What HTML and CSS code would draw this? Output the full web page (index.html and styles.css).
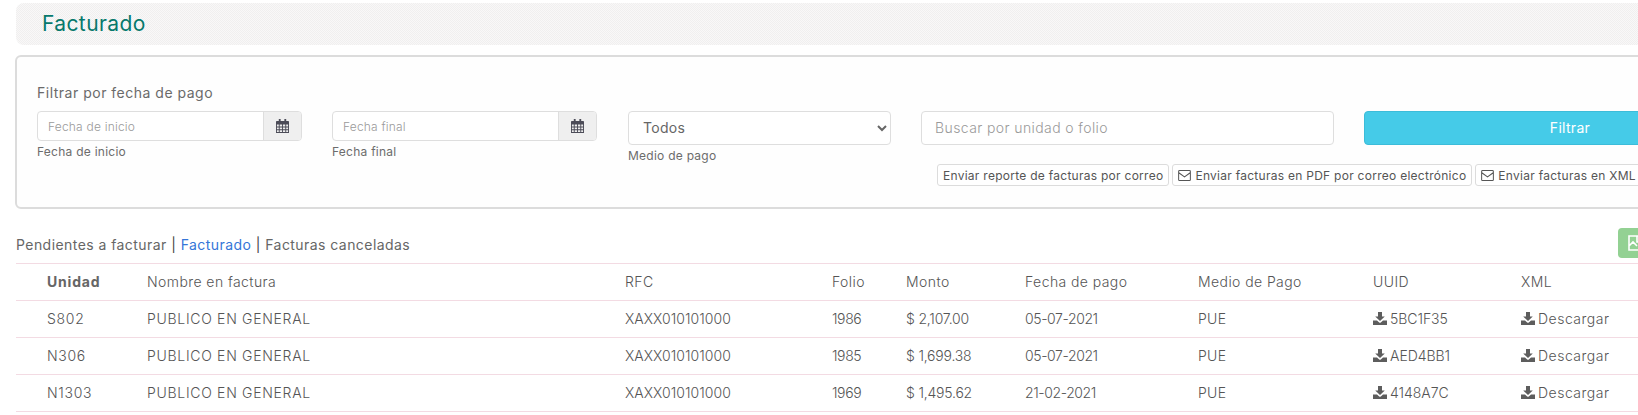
FILE: index.html
```html
<!DOCTYPE html>
<html lang="es">
<head>
<meta charset="utf-8">
<title>Facturado</title>
<link rel="stylesheet" href="styles.css">
</head>
<body>
<svg class="defs" width="0" height="0" aria-hidden="true">
  <symbol id="cal" viewBox="0 0 14 15">
    <path fill="currentColor" fill-rule="evenodd" d="M3 0h2v2h4V0h2v2h2.200c.4 0 .8.400.8.800V15H0V2.800C0 2.400.4 2 .8 2H3zM1 6v2h2V6zm3 0v2h2.500V6zm3.500 0v2H10V6zM11 6v2h2V6zM1 9v2h2V9zm3 0v2h2.500V9zm3.500 0v2H10V9zM11 9v2h2V9zM1 12v2h2v-2zm3 0v2h2.500v-2zm3.500 0v2H10v-2zM11 12v2h2v-2z"/>
  </symbol>
  <symbol id="env" viewBox="0 0 14 12">
    <path fill="none" stroke="currentColor" stroke-width="1.100" d="M1.500.6h11c.5 0 .9.400.9.900v9c0 .5-.4.900-.9.900h-11c-.5 0-.9-.4-.9-.9v-9c0-.5.400-.9.900-.900zM.8 3l6.200 4.600L13.200 3"/>
  </symbol>
  <symbol id="dl" viewBox="0 0 14 13">
    <path fill="currentColor" d="M5 0h4v4.500h2.800L7 9 2.200 4.500H5z"/>
    <path fill="currentColor" d="M0 8.500h4L6.200 10.500c.5.400 1.100.4 1.600 0L10 8.500h4V13H0z"/>
  </symbol>
</svg>

<main class="page">
  <header class="band"><h1 class="title">Facturado</h1></header>

  <section class="panel">
    <p class="panel-title">Filtrar por fecha de pago</p>
    <div class="filters">
      <div class="field date">
        <div class="date-group">
          <input class="date-input" type="text" placeholder="Fecha de inicio">
          <span class="addon"><svg class="cal"><use href="#cal"/></svg></span>
        </div>
        <span class="hint">Fecha de inicio</span>
      </div>
      <div class="field date date-last">
        <div class="date-group">
          <input class="date-input" type="text" placeholder="Fecha final">
          <span class="addon"><svg class="cal"><use href="#cal"/></svg></span>
        </div>
        <span class="hint">Fecha final</span>
      </div>
      <div class="field pay">
        <select class="select"><option>Todos</option></select>
        <span class="hint hint-low">Medio de pago</span>
      </div>
      <div class="field search">
        <input class="search-input" type="text" placeholder="Buscar por unidad o folio">
      </div>
      <button class="filter-btn" type="button">Filtrar</button>
    </div>
    <div class="mail-row">
      <button class="mail-btn" type="button">Enviar reporte de facturas por correo</button>
      <button class="mail-btn" type="button"><svg class="env"><use href="#env"/></svg>Enviar facturas en PDF por correo electrónico</button>
      <button class="mail-btn last" type="button"><svg class="env"><use href="#env"/></svg>Enviar facturas en XML</button>
    </div>
  </section>

  <div class="tabs-row">
    <p class="tabs">Pendientes a facturar <span class="sep">|</span> <a class="active" href="#">Facturado</a> <span class="sep">|</span> Facturas canceladas</p>
    <button class="export" type="button" aria-label="Exportar">
      <svg class="export-icon" viewBox="0 0 16 16"><path fill="none" stroke="#fff" stroke-width="1.600" d="M1 1h14v14H1zM1 11l4-4 4 4M9 1v6h6"/></svg>
    </button>
  </div>

  <table class="grid">
    <colgroup>
      <col class="c1"><col class="c2"><col class="c3"><col class="c4"><col class="c5"><col class="c6"><col class="c7"><col class="c8"><col class="c9">
    </colgroup>
    <thead>
      <tr><th class="first strong">Unidad</th><th>Nombre en factura</th><th>RFC</th><th>Folio</th><th>Monto</th><th>Fecha de pago</th><th>Medio de Pago</th><th>UUID</th><th>XML</th></tr>
    </thead>
    <tbody>
      <tr><td class="first caps">S802</td><td class="caps">PUBLICO EN GENERAL</td><td class="rfc">XAXX010101000</td><td class="num">1986</td><td class="amt">$ 2,107.00</td><td class="num">05-07-2021</td><td>PUE</td><td class="id"><svg class="dl"><use href="#dl"/></svg>5BC1F35</td><td class="get"><svg class="dl"><use href="#dl"/></svg>Descargar</td></tr>
      <tr><td class="first caps">N306</td><td class="caps">PUBLICO EN GENERAL</td><td class="rfc">XAXX010101000</td><td class="num">1985</td><td class="amt">$ 1,699.38</td><td class="num">05-07-2021</td><td>PUE</td><td class="id"><svg class="dl"><use href="#dl"/></svg>AED4BB1</td><td class="get"><svg class="dl"><use href="#dl"/></svg>Descargar</td></tr>
      <tr><td class="first caps">N1303</td><td class="caps">PUBLICO EN GENERAL</td><td class="rfc">XAXX010101000</td><td class="num">1969</td><td class="amt">$ 1,495.62</td><td class="num">21-02-2021</td><td>PUE</td><td class="id"><svg class="dl"><use href="#dl"/></svg>4148A7C</td><td class="get"><svg class="dl"><use href="#dl"/></svg>Descargar</td></tr>
    </tbody>
  </table>
</main>
</body>
</html>
```

FILE: styles.css
```css
* { box-sizing: border-box; }

html, body {
  margin: 0;
  height: 415px;
  overflow: hidden;
  background: #fff;
}

body {
  font-family: Inter, "Open Sans", sans-serif;
  font-size: 14px;
  color: #666;
}

.defs { position: absolute; }

.page {
  width: 1638px;
  height: 415px;
  overflow: hidden;
  padding: 3px 0 0 16px;
}

.band {
  width: 1640px;
  height: 42px;
  padding: 7px 0 0 26px;
  border-radius: 8px;
  background-color: #f5f4f4;
  background-image: repeating-conic-gradient(#f0efef 0 25%, #f9f8f8 0 50%);
  background-size: 2px 2px;
}

.title {
  margin: 0;
  font-size: 21px;
  line-height: 28px;
  font-weight: 400;
  letter-spacing: .4px;
  color: #07796c;
}

.panel {
  width: 1800px;
  height: 154px;
  margin: 10px 0 0 -1px;
  padding: 27px 0 0 20px;
  border: 2px solid #dcdcdc;
  border-radius: 6px;
  background: #fefefe;
}

.panel-title {
  margin: 0 0 9px;
  line-height: 18px;
  letter-spacing: .5px;
  color: #6a6a6a;
}

.filters {
  display: flex;
  align-items: flex-start;
}

.field {
  display: flex;
  flex: none;
  flex-direction: column;
}

.date { width: 265px; margin-right: 30px; }
.date-last { margin-right: 31px; }
.pay { width: 263px; margin-right: 30px; }
.search { width: 413px; margin-right: 30px; }

.date-group {
  display: flex;
  height: 30px;
  border: 1px solid #dedede;
  border-radius: 4px;
  overflow: hidden;
  background: #fff;
}

.date-input {
  flex: 1;
  min-width: 0;
  padding: 0 10px;
  border: 0;
  outline: 0;
  font: 300 12px Inter, sans-serif;
  letter-spacing: .2px;
  background: transparent;
}

.date-input::placeholder,
.search-input::placeholder { color: #9a9a9a; opacity: 1; }

.addon {
  display: flex;
  align-items: center;
  justify-content: center;
  width: 38px;
  border-left: 1px solid #dedede;
  background: #efefef;
  color: #4c4c58;
}

.cal { width: 13px; height: 14px; }

.hint {
  margin-top: 3px;
  font-size: 12px;
  line-height: 16px;
  letter-spacing: .25px;
  color: #6c6c6c;
}

.hint-low { margin-top: 3px; }

.select {
  height: 34px;
  padding: 0 8px 2px 10px;
  border: 1px solid #dedede;
  border-radius: 4px;
  background: #fff;
  font: 14px Inter, sans-serif;
  letter-spacing: .3px;
  color: #666;
  outline: 0;
}

.search-input {
  height: 34px;
  padding: 0 13px 2px;
  border: 1px solid #dedede;
  border-radius: 4px;
  background: #fff;
  font: 300 14px Inter, sans-serif;
  letter-spacing: .4px;
  outline: 0;
}

.filter-btn {
  flex: none;
  width: 412px;
  height: 34px;
  padding-bottom: 2px;
  border: 1px solid #3cbcd9;
  border-radius: 4px;
  background: #45cbe8;
  color: #fff;
  font: 14px Inter, sans-serif;
  letter-spacing: .3px;
}

.mail-row {
  display: flex;
  gap: 3px;
  margin: 0 0 0 900px;
}

.mail-btn {
  display: flex;
  align-items: center;
  flex: none;
  height: 22px;
  padding: 0 5px;
  border: 1px solid #dcdcdc;
  border-radius: 3px;
  background: #fff;
  font: 12px Inter, sans-serif;
  letter-spacing: .27px;
  color: #555;
  white-space: nowrap;
}

.last { width: 200px; }

.env { width: 13px; height: 11px; margin-right: 4px; color: #555; }

.tabs-row {
  display: flex;
  justify-content: space-between;
  width: 1622px;
  height: 54px;
  padding-top: 19px;
}

.tabs {
  margin: 8px 0 0;
  line-height: 18px;
  letter-spacing: .44px;
}

.sep { color: #444; }
.active { color: #3576d8; text-decoration: none; }

.export {
  display: flex;
  align-items: center;
  flex: none;
  width: 60px;
  height: 30px;
  margin-right: -40px;
  padding: 0 0 0 10px;
  border: 0;
  border-radius: 4px;
  background: #93d193;
}

.export-icon { width: 16px; height: 16px; }

.grid {
  width: 1784px;
  border-collapse: collapse;
  table-layout: fixed;
  border-top: 1px solid #f3dbe3;
}

.c1 { width: 131px; }
.c2 { width: 478px; }
.c3 { width: 207px; }
.c4 { width: 74px; }
.c5 { width: 119px; }
.c6 { width: 173px; }
.c7 { width: 175px; }
.c8 { width: 148px; }
.c9 { width: 279px; }

.grid th,
.grid td {
  height: 37px;
  padding: 0 0 2px;
  border-bottom: 1px solid #f3dbe3;
  font-size: 14px;
  font-weight: 300;
  letter-spacing: .42px;
  text-align: left;
  color: #555;
  white-space: nowrap;
}

.grid td { letter-spacing: .3px; }
.grid .first { padding-left: 31px; }
.grid .strong { font-weight: 700; color: #666; letter-spacing: .8px; }
.grid .caps { letter-spacing: .7px; }
.grid .rfc { letter-spacing: .05px; }
.grid .num { letter-spacing: -.4px; }
.grid .amt { letter-spacing: -.2px; }
.grid .id { letter-spacing: -.05px; }
.grid .get { letter-spacing: .5px; }

.dl {
  width: 14px;
  height: 13px;
  margin-right: 3px;
  vertical-align: -1px;
  color: #5d5d5d;
}
```
